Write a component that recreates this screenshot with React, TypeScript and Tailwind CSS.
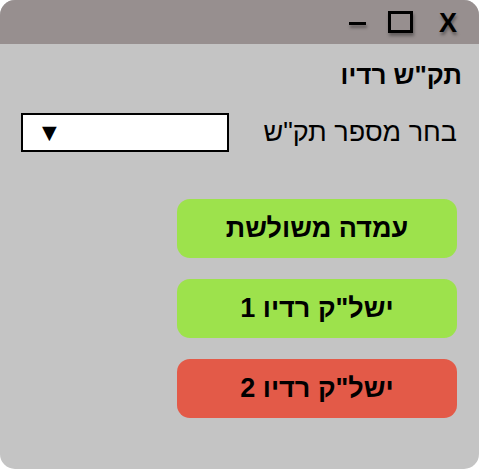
export default function App() {
  return (
    <div className="w-[479px] h-[469px] bg-white">
      <div
        className="w-[479px] h-[469px] rounded-[15px] overflow-hidden bg-[#c4c4c4] flex flex-col"
        style={{ fontFamily: '"Liberation Sans", Arial, sans-serif' }}
      >
        {/* title bar */}
        <div className="h-[44px] bg-[#978f8f] flex items-center justify-end shrink-0">
          <div className="w-[17px] h-[3px] bg-black mr-[22px] mt-[2px] shadow-[1px_3px_3px_rgba(0,0,0,0.35)]" />
          <div className="w-[25px] h-[22px] border-[3px] border-black mr-[26px] shadow-[1px_3px_3px_rgba(0,0,0,0.35)]" />
          <div className="text-[27px] font-bold leading-none text-black mr-[22px] mt-[2px] [text-shadow:1px_3px_3px_rgba(0,0,0,0.35)]">
            X
          </div>
        </div>

        {/* body */}
        <div dir="rtl" className="flex flex-col pr-[17px] pl-[21px]">
          <div className="mt-[18px] text-[26px] font-bold text-black leading-[26px]">תק"ש רדיו</div>

          <div className="mt-[25px] flex items-center justify-between">
            <label className="text-[27px] text-black mr-[5px] leading-none">בחר מספר תק"ש</label>
            <div className="w-[208px] h-[39px] bg-white border-2 border-black flex items-center justify-end pl-[14px]">
              <span className="text-[25px] leading-none text-black">▼</span>
            </div>
          </div>

          <div className="mt-[47px] flex flex-col gap-[21px] items-start mr-[5px]">
            <button className="w-[280px] h-[59px] rounded-[13px] bg-[#9de24c] text-[27px] font-bold text-black">
              עמדה משולשת
            </button>
            <button className="w-[280px] h-[59px] rounded-[13px] bg-[#9de24c] text-[27px] font-bold text-black">
              ישל"ק רדיו 1
            </button>
            <button className="w-[280px] h-[59px] rounded-[13px] bg-[#e35a48] text-[27px] font-bold text-black">
              ישל"ק רדיו 2
            </button>
          </div>
        </div>
      </div>
    </div>
  );
}
